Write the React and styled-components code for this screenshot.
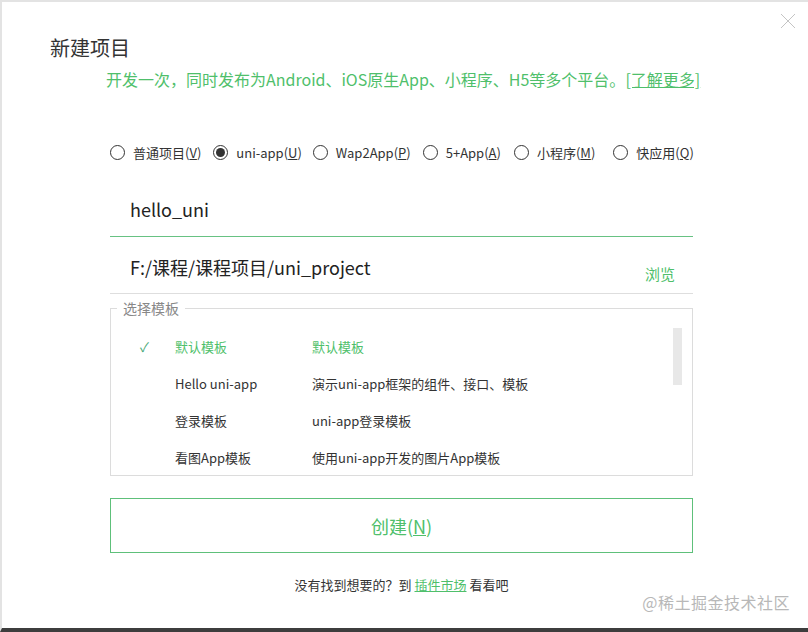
import React from "react";
import styled, { createGlobalStyle } from "styled-components";

const GREEN = "#4fbf6b";
const FONT = `"Noto Sans CJK SC", "Noto Sans", sans-serif`;

const Global = createGlobalStyle`
  html, body { margin: 0; padding: 0; background: #fff; }
  body { font-family: ${FONT}; }
`;

const Window = styled.div`
  position: relative;
  width: 808px;
  height: 632px;
  box-sizing: border-box;
  border-top: 2px solid #e3e3e3;
  border-left: 2px solid #e3e3e3;
  border-bottom: 4px solid #3d3d3d;
  background: #fff;
  display: flex;
  flex-direction: column;
  color: #333;
  overflow: hidden;
`;

const Close = styled.button`
  position: absolute;
  top: 10px;
  right: 11px;
  width: 18px;
  height: 18px;
  padding: 0;
  border: 0;
  background: none;
`;

const Title = styled.h1`
  margin: 33px 0 0 48px;
  font-size: 20px;
  font-weight: 400;
  line-height: 26px;
  color: #333;
`;

const Subtitle = styled.p`
  margin: 7px 0 0 104px;
  font-size: 16px;
  line-height: 22px;
  color: ${GREEN};
  a { color: ${GREEN}; text-decoration: underline; }
`;

const Content = styled.div`
  margin-left: 108px;
  width: 583px;
  display: flex;
  flex-direction: column;
`;

const RadioRow = styled.div`
  margin-top: 52px;
  display: flex;
  align-items: center;
  height: 20px;
  font-size: 13px;
  color: #333;
`;

const RadioItem = styled.label`
  display: flex;
  align-items: center;
  gap: 8px;
  margin-right: ${(p) => p.$gap}px;
  white-space: nowrap;
`;

const Circle = styled.span`
  width: 15px;
  height: 15px;
  box-sizing: border-box;
  border: 1px solid #333;
  border-radius: 50%;
  display: flex;
  align-items: center;
  justify-content: center;
  &::after {
    content: "";
    width: 9px;
    height: 9px;
    border-radius: 50%;
    background: ${(p) => (p.$checked ? "#333" : "transparent")};
  }
`;

const U = styled.span`
  text-decoration: underline;
`;

const Field = styled.div`
  height: ${(p) => p.$h}px;
  box-sizing: border-box;
  border-bottom: 1px solid ${(p) => (p.$active ? "#67c283" : "#dedede")};
  display: flex;
  align-items: flex-start;
  justify-content: space-between;
  padding: 0 18px 0 20px;
`;

const FieldText = styled.span`
  font-size: 18px;
  color: #222;
  line-height: 26px;
  padding-top: ${(p) => p.$pt || 0}px;
`;

const Browse = styled.span`
  font-size: 15px;
  line-height: 22px;
  color: ${GREEN};
  padding-top: 26px;
`;

const Fieldset = styled.fieldset`
  margin: 6px 0 0;
  padding: 12px 0 0 0;
  height: 176px;
  box-sizing: border-box;
  border: 1px solid #dcdcdc;
  position: relative;
  min-width: 0;
`;

const Legend = styled.legend`
  margin-left: 6px;
  padding: 0 6px;
  font-size: 14px;
  line-height: 16px;
  color: #888;
`;

const TemplateRow = styled.div`
  display: grid;
  grid-template-columns: 64px 137px 1fr;
  height: 37px;
  align-items: center;
  font-size: 13px;
  color: ${(p) => (p.$active ? GREEN : "#333")};
`;

const Check = styled.span`
  justify-self: start;
  padding-left: 29px;
  color: #4aa877;
  font-size: 13px;
`;

const Scrollbar = styled.div`
  position: absolute;
  right: 10px;
  top: 12px;
  width: 9px;
  height: 57px;
  background: #e8e8e8;
`;

const CreateButton = styled.button`
  margin-top: 22px;
  height: 55px;
  border: 1px solid #5ec07a;
  background: #fff;
  color: ${GREEN};
  font-family: ${FONT};
  font-size: 18px;
  padding: 0;
`;

const Footer = styled.p`
  margin: 22px 0 0;
  text-align: center;
  font-size: 13px;
  color: #333;
  a { color: ${GREEN}; text-decoration: underline; }
`;

const Watermark = styled.div`
  position: absolute;
  right: 18px;
  bottom: 14px;
  font-size: 16px;
  color: #b8b8b8;
  letter-spacing: 0.5px;
`;

const radios = [
  { label: "普通项目", key: "V", gap: 12 },
  { label: "uni-app", key: "U", gap: 11, checked: true },
  { label: "Wap2App", key: "P", gap: 12 },
  { label: "5+App", key: "A", gap: 13 },
  { label: "小程序", key: "M", gap: 18 },
  { label: "快应用", key: "Q", gap: 0 },
];

const templates = [
  { name: "默认模板", desc: "默认模板", active: true },
  { name: "Hello uni-app", desc: "演示uni-app框架的组件、接口、模板" },
  { name: "登录模板", desc: "uni-app登录模板" },
  { name: "看图App模板", desc: "使用uni-app开发的图片App模板" },
];

export default function App() {
  return (
    <Window>
      <Global />
      <Close aria-label="close">
        <svg width="18" height="18" viewBox="0 0 18 18">
          <path d="M2 2 L16 16 M16 2 L2 16" stroke="#c4c4c4" strokeWidth="1" fill="none" />
        </svg>
      </Close>
      <Title>新建项目</Title>
      <Subtitle>
        开发一次，同时发布为Android、iOS原生App、小程序、H5等多个平台。<a>[了解更多]</a>
      </Subtitle>
      <Content>
        <RadioRow>
          {radios.map((r) => (
            <RadioItem key={r.key} $gap={r.gap}>
              <Circle $checked={r.checked} />
              <span>
                {r.label}(<U>{r.key}</U>)
              </span>
            </RadioItem>
          ))}
        </RadioRow>
        <Field $h={75} $active>
          <FieldText $pt={34}>hello_uni</FieldText>
        </Field>
        <Field $h={57}>
          <FieldText $pt={17}>F:/课程/课程项目/uni_project</FieldText>
          <Browse>浏览</Browse>
        </Field>
        <Fieldset>
          <Legend>选择模板</Legend>
          <Scrollbar />
          {templates.map((t) => (
            <TemplateRow key={t.name} $active={t.active}>
              <Check>{t.active ? "✓" : ""}</Check>
              <span>{t.name}</span>
              <span>{t.desc}</span>
            </TemplateRow>
          ))}
        </Fieldset>
        <CreateButton>
          创建(<U>N</U>)
        </CreateButton>
        <Footer>
          没有找到想要的？到 <a>插件市场</a> 看看吧
        </Footer>
      </Content>
      <Watermark>@稀土掘金技术社区</Watermark>
    </Window>
  );
}
